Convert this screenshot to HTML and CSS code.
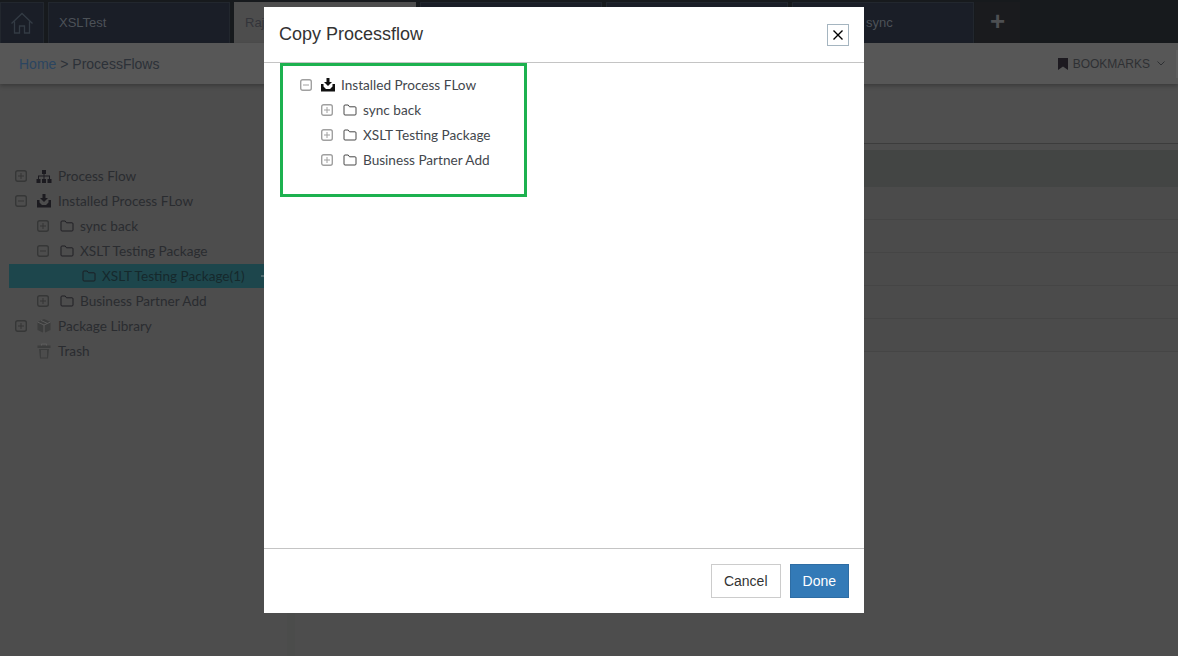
FILE: index.html
```html
<!DOCTYPE html>
<html>
<head>
<meta charset="utf-8">
<title>Copy Processflow</title>
<link rel="stylesheet" href="styles.css">
</head>
<body>
<svg class="sprites" width="0" height="0">
  <symbol id="i-plus" viewBox="0 0 12 12"><rect x=".7" y=".7" width="10.600" height="10.600" rx="2" fill="none" stroke="currentColor" stroke-width="1.400"/><path d="M3 6h6M6 3v6" stroke="currentColor" fill="none"/></symbol>
  <symbol id="i-minus" viewBox="0 0 12 12"><rect x=".7" y=".7" width="10.600" height="10.600" rx="2" fill="none" stroke="currentColor" stroke-width="1.400"/><path d="M3 6h6" stroke="currentColor" fill="none"/></symbol>
  <symbol id="i-folder" viewBox="0 0 16 16"><path d="M3 4a1 1 0 0 1 1-1h3.200l1.300 1.800h5.500a1 1 0 0 1 1 1V12a1 1 0 0 1-1 1h-10a1 1 0 0 1-1-1z" fill="none" stroke="currentColor" stroke-width=".9"/></symbol>
  <symbol id="i-inbox" viewBox="0 0 16 16"><path d="M6.500 1h3v4H12L8 9 4 5h2.500z" fill="currentColor"/><path d="M1 7h2.500v2.500L6 12h4l2.500-2.500V7H15v7.500H1z" fill="currentColor"/></symbol>
  <symbol id="i-sitemap" viewBox="0 0 16 16"><path d="M6 2h4v4H8.500v1.500H14V11h1.500v4h-4v-4H13V8.500H8.500V11H10v4H6v-4h1.500V8.500H3V11h1.500v4h-4v-4H2V7.500h5.500V6H6z" fill="currentColor"/></symbol>
  <symbol id="i-box" viewBox="0 0 16 16"><path d="M8 1l6.500 3v8L8 15l-6.500-3V4z" fill="#3c3d3d"/><path d="M1.500 4L8 7l6.500-3M8 7v8M5 2.500l6.500 3" stroke="#5c5c5c" fill="none"/></symbol>
  <symbol id="i-trash" viewBox="0 0 16 16"><path d="M1.500 2.500h13V5h-13zM3 6h10l-1 9.500H4z" fill="#3c3d3d"/><path d="M6 7v7.500M8 7v7.500M10 7v7.500M5.500 2.500V1h5v1.500" stroke="#5c5c5c" fill="none"/></symbol>
</svg>

<div class="page">
  <div class="tabbar">
    <div class="home-tab">
      <svg width="24" height="24" viewBox="0 0 24 24"><path d="M1.500 12.500L12 2.500l10.500 10M4.500 10.500V22h5v-7h5v7h5V10.500" fill="none" stroke="currentColor" stroke-width="1.300"/></svg>
    </div>
    <div class="tab">XSLTest</div>
    <div class="tab active">Raj</div>
    <div class="tab"></div>
    <div class="tab"></div>
    <div class="tab tail">sync</div>
    <div class="add-tab">+</div>
  </div>

  <div class="crumbs">
    <div class="crumb-path"><a class="crumb-link">Home</a> &gt; ProcessFlows</div>
    <div class="bookmarks">
      <svg class="bookmark-icon" width="10" height="12" viewBox="0 0 10 12"><path d="M0 0h10v12L5 8.500 0 12z" fill="currentColor"/></svg>
      <span>BOOKMARKS</span>
      <svg class="bookmark-caret" width="8" height="5" viewBox="0 0 8 5"><path d="M.5.500L4 4 7.500.500" fill="none" stroke="currentColor"/></svg>
    </div>
    <div class="crumb-end"></div>
  </div>

  <div class="main">
    <div class="sidebar">
      <div class="tree-row"><svg class="toggle"><use href="#i-plus"/></svg><svg class="node-icon"><use href="#i-sitemap"/></svg><span>Process Flow</span></div>
      <div class="tree-row"><svg class="toggle"><use href="#i-minus"/></svg><svg class="node-icon"><use href="#i-inbox"/></svg><span>Installed Process FLow</span></div>
      <div class="tree-row lvl1"><svg class="toggle"><use href="#i-plus"/></svg><svg class="node-icon"><use href="#i-folder"/></svg><span>sync back</span></div>
      <div class="tree-row lvl1"><svg class="toggle"><use href="#i-minus"/></svg><svg class="node-icon"><use href="#i-folder"/></svg><span>XSLT Testing Package</span></div>
      <div class="tree-row lvl2 selected"><span class="toggle"></span><svg class="node-icon"><use href="#i-folder"/></svg><span>XSLT Testing Package(1)</span></div>
      <div class="tree-row lvl1"><svg class="toggle"><use href="#i-plus"/></svg><svg class="node-icon"><use href="#i-folder"/></svg><span>Business Partner Add</span></div>
      <div class="tree-row"><svg class="toggle"><use href="#i-plus"/></svg><svg class="node-icon"><use href="#i-box"/></svg><span>Package Library</span></div>
      <div class="tree-row"><span class="toggle"></span><svg class="node-icon"><use href="#i-trash"/></svg><span>Trash</span></div>
    </div>
    <div class="splitter"></div>
    <div class="content">
      <div class="content-top"></div>
      <div class="table-head"></div>
      <div class="table-row"></div>
      <div class="table-row"></div>
      <div class="table-row"></div>
      <div class="table-row"></div>
      <div class="table-row"></div>
    </div>
  </div>
</div>

<div class="modal">
  <div class="modal-header">
    <h4 class="modal-title">Copy Processflow</h4>
    <button class="modal-close">
      <svg width="12" height="12" viewBox="0 0 12 12"><path d="M1.500 1.500l9 9M10.500 1.500l-9 9" stroke="#000" stroke-width="1.400" fill="none"/></svg>
    </button>
  </div>
  <div class="modal-body">
    <div class="picker">
      <div class="tree-row"><svg class="toggle"><use href="#i-minus"/></svg><svg class="node-icon"><use href="#i-inbox"/></svg><span>Installed Process FLow</span></div>
      <div class="tree-row lvl1"><svg class="toggle"><use href="#i-plus"/></svg><svg class="node-icon"><use href="#i-folder"/></svg><span>sync back</span></div>
      <div class="tree-row lvl1"><svg class="toggle"><use href="#i-plus"/></svg><svg class="node-icon"><use href="#i-folder"/></svg><span>XSLT Testing Package</span></div>
      <div class="tree-row lvl1"><svg class="toggle"><use href="#i-plus"/></svg><svg class="node-icon"><use href="#i-folder"/></svg><span>Business Partner Add</span></div>
    </div>
  </div>
  <div class="modal-footer">
    <button class="btn">Cancel</button>
    <button class="btn btn-primary">Done</button>
  </div>
</div>
</body>
</html>
```

FILE: styles.css
```css
/* page colours are the dimmed ones, as seen under the modal backdrop */
html, body {
    margin: 0;
    height: 100%;
    overflow: hidden;
}
body {
    background-color: #4d4d4d;
    font-family: "Liberation Sans", Arial, sans-serif;
    font-size: 14px;
}
.sprites {
    display: block;
    height: 0;
}
.page {
    display: flex;
    flex-direction: column;
    height: 656px;
}

/* tabs */
.tabbar {
    display: flex;
    flex: none;
    height: 41px;
    padding-top: 2px;
    background-color: #171a1d;
}
.home-tab {
    display: flex;
    align-items: center;
    justify-content: center;
    box-sizing: border-box;
    width: 44px;
    margin-right: 4px;
    background-color: #1a1e27;
    border: 1px solid #22272e;
    border-bottom: 0;
    color: #333b44;
}
.tab {
    box-sizing: border-box;
    width: 182px;
    margin-right: 4px;
    padding: 12px 10px 0;
    background-color: #1a1e27;
    border: 1px solid #22272e;
    border-bottom: 0;
    color: #4c5157;
    font-size: 13px;
    white-space: nowrap;
}
.tab.active {
    background-color: #4d4d4d;
    border-color: #4d4d4d;
    color: #33343a;
}
.tab.tail {
    padding-left: 73px;
}
.add-tab {
    width: 45px;
    margin-left: -3px;
    background-color: #1a1b1e;
    color: #4d4f52;
    font-size: 26px;
    font-weight: bold;
    line-height: 38px;
    text-align: center;
}

/* breadcrumb bar */
.crumbs {
    display: flex;
    flex: none;
    align-items: center;
    height: 41px;
    padding-left: 19px;
    background-color: #575757;
    box-shadow: 0 2px 4px rgba(0, 0, 0, .25);
    color: #2c3138;
    font-size: 14px;
    position: relative;
}
.crumb-link {
    color: #2b4560;
}
.crumb-path {
    flex: 1;
}
.bookmarks {
    display: flex;
    align-items: center;
    font-size: 12px;
    color: #2e3033;
}
.bookmark-icon {
    margin-right: 5px;
    color: #1d1a20;
}
.bookmark-caret {
    margin-left: 7px;
}
.crumb-end {
    width: 2px;
    height: 28px;
    margin-left: 11px;
    background-color: #5e5e5e;
}

/* body of the page */
.main {
    display: grid;
    flex: 1;
    grid-template-columns: 287px 8px 1fr;
}
.sidebar {
    padding: 79px 0 0 9px;
    color: #2a2c30;
}
.splitter {
    background-color: #4b4c4b;
}
.content-top {
    height: 59px;
    border-bottom: 1px solid #3c3c3c;
    background-color: #4f4f4f;
}
.table-head {
    height: 37px;
    margin-top: 6px;
    background-color: #434544;
}
.table-row {
    height: 32px;
    border-bottom: 1px solid #454545;
    background-color: #4b4b4b;
}

/* tree, used in the sidebar and the dialog */
.tree-row {
    display: flex;
    align-items: center;
    height: 25px;
    padding-left: 6px;
    font-family: Lato, "Liberation Sans", sans-serif;
    font-size: 13.6px;
    white-space: nowrap;
}
.tree-row.lvl1 {
    padding-left: 28px;
}
.tree-row.lvl2 {
    padding-left: 50px;
}
.tree-row.selected {
    height: 24px;
    margin-top: 1px;
    background-color: #1d464c;
    color: #16292c;
}
.tree-row.selected::after {
    content: "";
    width: 3px;
    height: 2px;
    margin-left: auto;
    margin-right: 23px;
    background-color: #4d6a6e;
}
.toggle {
    flex: none;
    width: 12px;
    height: 12px;
    margin-right: 9px;
    color: #363737;
}
.node-icon {
    flex: none;
    width: 16px;
    height: 16px;
    margin-right: 6px;
    color: #1c1b20;
}

/* dialog */
.modal {
    position: fixed;
    left: 264px;
    top: 7px;
    display: flex;
    flex-direction: column;
    width: 600px;
    height: 606px;
    background-color: #fff;
    color: #333;
}
.modal-header {
    display: flex;
    flex: none;
    align-items: center;
    justify-content: space-between;
    box-sizing: border-box;
    height: 56px;
    padding: 0 15px;
    border-bottom: 1px solid #c4c4c4;
}
.modal-title {
    margin: 0;
    font-size: 18px;
    font-weight: normal;
}
.modal-close {
    display: flex;
    align-items: center;
    justify-content: center;
    box-sizing: border-box;
    width: 22px;
    height: 22px;
    padding: 0;
    background: #fff;
    border: 1px solid #a5b5c0;
}
.modal-body {
    flex: 1;
    padding: 0 16px;
}
.picker {
    box-sizing: border-box;
    width: 247px;
    height: 134px;
    padding: 6px 0 0 17px;
    border: 3px solid #1db14f;
}
.picker .tree-row {
    padding-left: 0;
    color: #43474d;
}
.picker .tree-row.lvl1 {
    padding-left: 21px;
}
.picker .toggle {
    margin-right: 8px;
    color: #a0a0a0;
}
.picker .node-icon {
    margin-right: 5px;
    color: #111;
}
.picker .lvl1 .node-icon {
    margin-right: 6px;
    color: #333;
}
.modal-footer {
    display: flex;
    flex: none;
    justify-content: flex-end;
    gap: 9px;
    box-sizing: border-box;
    height: 65px;
    padding: 15px 15px 0;
    border-top: 1px solid #c4c4c4;
}
.btn {
    height: 34px;
    padding: 0 12px;
    background: #fff;
    border: 1px solid #ccc;
    color: #333;
    font-family: inherit;
    font-size: 14px;
}
.btn-primary {
    background-color: #337ab7;
    border-color: #2e6da4;
    color: #fff;
}
```
